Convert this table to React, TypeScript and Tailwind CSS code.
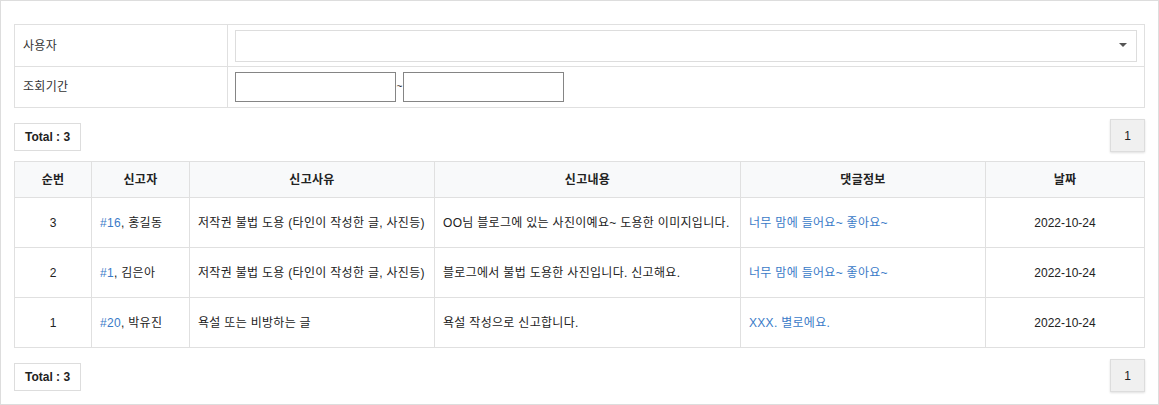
import React from "react";

const rows = [
  { no: 3, id: "#16", name: "홍길동", reason: "저작권 불법 도용 (타인이 작성한 글, 사진등)", content: "OO님 블로그에 있는 사진이예요~ 도용한 이미지입니다.", comment: "너무 맘에 들어요~ 좋아요~", date: "2022-10-24" },
  { no: 2, id: "#1", name: "김은아", reason: "저작권 불법 도용 (타인이 작성한 글, 사진등)", content: "블로그에서 불법 도용한 사진입니다. 신고해요.", comment: "너무 맘에 들어요~ 좋아요~", date: "2022-10-24" },
  { no: 1, id: "#20", name: "박유진", reason: "욕설 또는 비방하는 글", content: "욕설 작성으로 신고합니다.", comment: "XXX. 별로에요.", date: "2022-10-24" },
];

function Bar() {
  return (
    <div className="flex items-start justify-between h-[33px]">
      <div className="mt-[4px] h-[28px] w-[67px] border border-[#ddd] flex items-center justify-center text-[12px] font-bold text-[#222]">
        Total : 3
      </div>
      <div className="h-[33px] w-[35px] border border-[#ddd] bg-[#f0f0f0] shadow-[0_1px_2px_rgba(0,0,0,0.12)] flex items-center justify-center text-[12px] text-[#222]">
        1
      </div>
    </div>
  );
}

export default function App() {
  const font = { fontFamily: '"Liberation Sans", "Noto Sans CJK KR", Arial, sans-serif' };
  return (
    <div style={font} className="w-[1159px] h-[405px] border border-[#ddd] bg-white pl-[13px] pr-[13px] pt-[23px] text-[#333] text-[12px]">
      <table className="w-[1131px] border-collapse table-fixed">
        <colgroup>
          <col className="w-[213px]" />
          <col />
        </colgroup>
        <tbody>
          <tr className="h-[42px]">
            <td className="border border-[#e0e0e0] pl-[8px] text-[12px] text-[#333] tracking-[0.3px]">사용자</td>
            <td className="border border-[#e0e0e0] pl-[7px] pr-[7px]">
              <div className="relative h-[32px] border border-[#ddd] bg-white">
                <span className="absolute right-[9px] top-[12px] w-0 h-0 border-l-[4px] border-r-[4px] border-t-[4px] border-l-transparent border-r-transparent border-t-[#555]" />
              </div>
            </td>
          </tr>
          <tr className="h-[41px]">
            <td className="border border-[#e0e0e0] pl-[8px] text-[12px] text-[#333] tracking-[0.3px]">조회기간</td>
            <td className="border border-[#e0e0e0] pl-[7px]">
              <div className="flex items-center">
                <div className="w-[161px] h-[30px] border border-[#858585] bg-white" />
                <span className="w-[7px] text-center text-[10px] leading-none">~</span>
                <div className="w-[161px] h-[30px] border border-[#858585] bg-white" />
              </div>
            </td>
          </tr>
        </tbody>
      </table>

      <div className="mt-[11px]">
        <Bar />
      </div>

      <table className="mt-[9px] w-[1131px] border-collapse table-fixed">
        <colgroup>
          <col className="w-[77px]" />
          <col className="w-[98px]" />
          <col className="w-[245px]" />
          <col className="w-[306px]" />
          <col className="w-[245px]" />
          <col />
        </colgroup>
        <thead>
          <tr className="h-[36px] bg-[#f8f9fa]">
            {["순번", "신고자", "신고사유", "신고내용", "댓글정보", "날짜"].map((h) => (
              <th key={h} className="border border-[#e0e0e0] text-center font-bold text-[12px] text-[#222] tracking-[0.3px]">
                {h}
              </th>
            ))}
          </tr>
        </thead>
        <tbody>
          {rows.map((r) => (
            <tr key={r.no} className="h-[50px]">
              <td className="border border-[#e0e0e0] text-center text-[#222]">{r.no}</td>
              <td className="border border-[#e0e0e0] pl-[8px] whitespace-nowrap text-[#222] tracking-[0.3px]">
                <span className="text-[#3a7bc8]">{r.id}</span>, {r.name}
              </td>
              <td className="border border-[#e0e0e0] pl-[8px] whitespace-nowrap text-[#222] tracking-[0.3px]">{r.reason}</td>
              <td className="border border-[#e0e0e0] pl-[8px] whitespace-nowrap text-[#222] tracking-[0.3px]">{r.content}</td>
              <td className="border border-[#e0e0e0] pl-[8px] whitespace-nowrap text-[#3a7bc8] tracking-[0.3px]">{r.comment}</td>
              <td className="border border-[#e0e0e0] text-center text-[#222]">{r.date}</td>
            </tr>
          ))}
        </tbody>
      </table>

      <div className="mt-[11px]">
        <Bar />
      </div>
    </div>
  );
}
